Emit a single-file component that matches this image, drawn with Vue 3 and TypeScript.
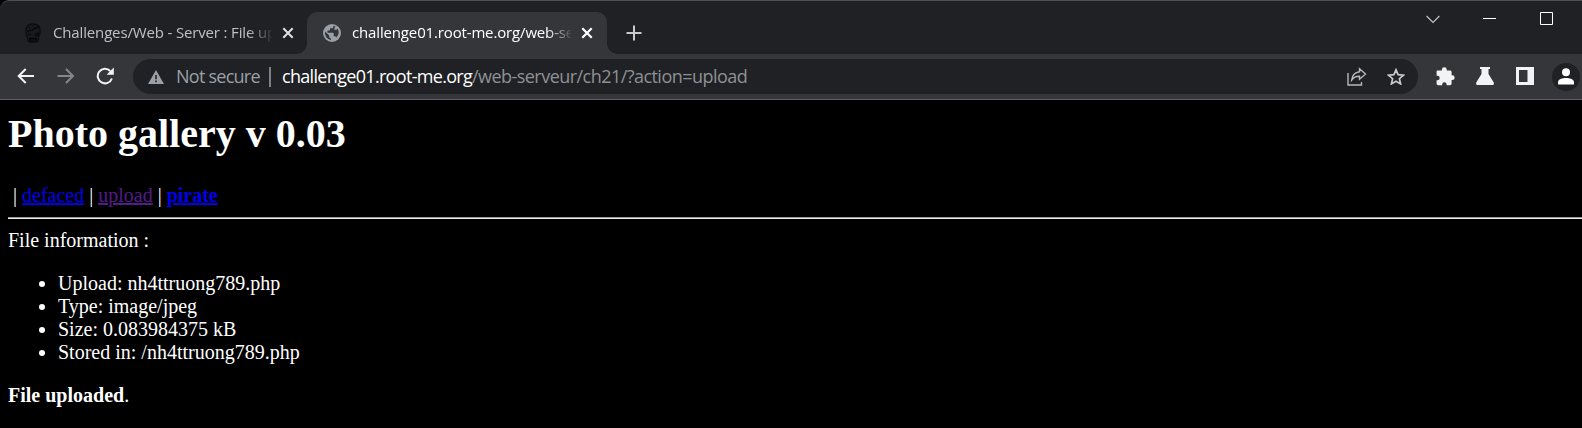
<script setup lang="ts">
interface NavLink { label: string; kind: string }

const links: NavLink[] = [
  { label: 'defaced', kind: 'plain' },
  { label: 'upload', kind: 'visited' },
  { label: 'pirate', kind: 'strong' },
]
const details: string[] = [
  'Upload: nh4ttruong789.php',
  'Type: image/jpeg',
  'Size: 0.083984375 kB',
  'Stored in: /nh4ttruong789.php',
]
</script>

<template>
  <div class="window">
    <header class="strip">
      <div class="tab">
        <svg class="skull" width="16" height="20" viewBox="0 0 16 20">
          <path d="M8 .8C3.500.8.800 3.700.8 8c0 2.400.6 4.300 1.500 5.800L3 18l2 1.200h6l2-1.200.7-4.200C14.600 12.300 15.200 10.400 15.200 8 15.200 3.700 12.500.8 8 .8z" fill="#191a1c" stroke="#0c0c0d" stroke-width="1.200" />
          <path d="M2 8.500 7 7l7-3.500M3 11l3 .6M9 11.500l4-1.500v2l-3 1M5 15.500v3M7 15.500v3M9 15.500v3M11 15.500v3M4 15.300h8M4 4.500h1M7 3h1M9 5h1" fill="none" stroke="#060607" stroke-width="1.200" />
        </svg>
        <span class="title">Challenges/Web - Server : File up</span>
        <svg class="close" width="12" height="12" viewBox="0 0 12 12"><path d="M1.300 1.300l9.400 9.400M10.700 1.300 1.300 10.700" stroke="#dfe1e5" stroke-width="2" /></svg>
      </div>
      <div class="tab active">
        <svg class="globe" width="18" height="18" viewBox="0 0 18 18">
          <circle cx="9" cy="9" r="9" fill="#9aa0a6" />
          <path d="M10.500 1.800v.6c0 1-.8 1.800-1.800 1.800H7v1.500c0 .6-.5.9-1 .9H4.500v2.200h5.200c.6 0 1 .5 1 1v2.400h.9c.8 0 1.500.5 1.700 1.200A7.100 7.100 0 0 0 14.500 4.500l-.9 1.200h-2.200V4l1.100-1.300a7 7 0 0 0-2-.9zM2 7.400a7.200 7.200 0 0 0 6 8.700v-1.700c-1 0-1.800-.8-1.800-1.800v-1z" fill="#35363a" />
        </svg>
        <span class="title">challenge01.root-me.org/web-se</span>
        <svg class="close" width="12" height="12" viewBox="0 0 12 12"><path d="M1.300 1.300l9.400 9.400M10.700 1.300 1.300 10.700" stroke="#fff" stroke-width="2.200" /></svg>
      </div>
      <svg class="plus" width="16" height="16" viewBox="0 0 16 16"><path d="M8 .5v15M.5 8h15" stroke="#c8cacd" stroke-width="2" /></svg>
      <div class="controls">
        <svg width="14" height="14" viewBox="0 0 14 14"><path d="M.6 4 7 10.500 13.400 4" fill="none" stroke="#c5c6c7" stroke-width="1.100" /></svg>
        <svg width="13" height="13" viewBox="0 0 13 13"><path d="M0 6.500h13" stroke="#fff" /></svg>
        <svg width="13" height="13" viewBox="0 0 13 13"><path d="M.5.5h12v12H.5z" fill="none" stroke="#fff" /></svg>
      </div>
    </header>

    <div class="toolbar">
      <svg class="back" width="18" height="16" viewBox="0 0 18 16"><path d="M17 8H2M8.700 1 1.700 8l7 7" fill="none" stroke="#f1f3f4" stroke-width="2" /></svg>
      <svg class="forward" width="18" height="16" viewBox="0 0 18 16"><path d="M.5 8H15M9 1l7 7-7 7" fill="none" stroke="#85868a" stroke-width="2" /></svg>
      <svg class="reload" width="18" height="18" viewBox="0 0 18 18"><path d="M15.900 11.500A7.300 7.300 0 1 1 14.300 4" fill="none" stroke="#f1f3f4" stroke-width="2" /><path d="M17.800.6v7.200h-7.200z" fill="#f1f3f4" /></svg>
      <div class="omnibox">
        <svg class="warn" width="16" height="14" viewBox="0 0 16 14"><path d="M8 0l8 14H0z" fill="#9aa0a6" /><path d="M8 5v4.200M8 10.500v1.800" stroke="#202124" stroke-width="1.600" /></svg>
        <span class="insecure">Not secure</span>
        <i class="divider" />
        <span class="host">challenge01.root-me.org</span><span class="path">/web-serveur/ch21/?action=upload</span>
        <svg class="share" width="20" height="19" viewBox="0 0 20 19"><path d="M1 6v12h13.500v-3" fill="none" stroke="#b6b8bb" stroke-width="1.400" /><path d="M12.500 1.800 18.500 7l-6 5.200V9.300C9.200 9.200 6.700 10.400 4.700 13c.5-4.200 3-7.500 7.800-8.200z" fill="none" stroke="#b6b8bb" stroke-width="1.400" /></svg>
        <svg class="star" width="18" height="17" viewBox="0 0 18 17"><path d="M9 1.800l2.100 4.900 5.300.5-4 3.500 1.200 5.200L9 13.200l-4.600 2.700 1.200-5.200-4-3.500 5.300-.5z" fill="none" stroke="#c7c9cb" stroke-width="1.700" /></svg>
      </div>
      <svg class="puzzle" width="19" height="19" viewBox="0 0 19 19"><path d="M1.700 3.400h4.200V2.600a2.400 2.400 0 0 1 4.800 0v.8h3.200c1 0 1.700.7 1.700 1.700v3.200h.7a2.350 2.350 0 0 1 0 4.700h-.7v3.600c0 1-.7 1.700-1.700 1.700h-3.300v-.9a2.200 2.200 0 0 0-4.400 0v.9H2.300C1.300 18.300.6 17.600.6 16.600v-3.400h.9a2.200 2.200 0 0 0 0-4.400H.6V4.500c0-.7.4-1.100 1.100-1.100z" fill="#f1f3f4" /></svg>
      <svg class="flask" width="18" height="18" viewBox="0 0 18 18"><path d="M4 0h10v2h-1.500v5L17.600 15.300c.7 1.300.1 2.700-1.300 2.700H1.700C.3 18-.3 16.600.4 15.300L5.500 7V2H4z" fill="#f1f3f4" /></svg>
      <svg class="panel" width="18" height="18" viewBox="0 0 18 18"><path fill-rule="evenodd" d="M0 0h18v18H0zM3 3v12h8.500V3z" fill="#f1f3f4" /></svg>
      <div class="avatar"><svg width="16" height="17" viewBox="0 0 16 17"><circle cx="8" cy="4.300" r="4" fill="#fff" /><path d="M0 16.500v-2.200C0 11.300 4.500 10 8 10s8 1.300 8 4.300v2.200z" fill="#fff" /></svg></div>
    </div>

    <main class="page">
      <h1>Photo gallery v 0.03</h1>
      <nav>&nbsp;<template v-for="link in links" :key="link.label">|&nbsp;<a :class="link.kind">{{ link.label }}</a>&nbsp;</template></nav>
      <hr>
      <p class="info">File information :</p>
      <ul><li v-for="item in details" :key="item">{{ item }}</li></ul>
      <p><b>File uploaded</b>.</p>
    </main>
  </div>
</template>

<style>
body { margin: 0; background: #000; overflow: hidden; }
</style>

<style scoped>
.window { width: 1582px; height: 428px; overflow: hidden; background: #000; font-family: "Open Sans", "Noto Sans", sans-serif; }
svg { display: block; flex: none; }
.strip { box-sizing: border-box; height: 54px; display: flex; align-items: flex-end; background: #202124; border-top: 1px solid #4d504e; padding-left: 7px; border-top-left-radius: 9px; }
.tab { position: relative; width: 300px; height: 42px; box-sizing: border-box; display: flex; align-items: center; padding-left: 18px; color: #bdc1c6; font-size: 15px; flex: none; }
.title { width: 219px; margin: -2px 0 0 12px; white-space: nowrap; letter-spacing: -0.15px; line-height: 24px; mask-image: linear-gradient(90deg, #000 89%, transparent 101%); }
.active .title { margin-left: 11px; }
.close { margin-left: 10px; }
.tab.active { background: #35363a; border-radius: 10px 10px 0 0; color: #fff; padding-left: 16px; }
.tab.active::before, .tab.active::after { content: ""; position: absolute; bottom: 0; width: 10px; height: 10px; }
.tab.active::before { left: -10px; background: radial-gradient(circle at 0 0, transparent 9.5px, #35363a 10px); }
.tab.active::after { right: -10px; background: radial-gradient(circle at 100% 0, transparent 9.5px, #35363a 10px); }
.plus { margin: 0 0 13px 19px; }
.controls { margin-left: auto; display: flex; gap: 44px; padding-right: 29px; margin-bottom: 28px; }
.controls svg:first-child { margin-right: -1px; }
.toolbar { box-sizing: border-box; height: 46px; background: #35363a; border-bottom: 1px solid #616266; display: flex; align-items: center; padding-bottom: 1px; }
.back { margin-left: 17px; }
.forward { margin-left: 22px; }
.reload { margin-left: 21px; }
.omnibox { width: 1285px; height: 35px; border-radius: 18px; background: #202124; margin: 1px 0 0 19px; display: flex; align-items: center; font-size: 18px; line-height: 26px; white-space: nowrap; flex: none; }
.warn { margin-left: 15px; margin-top: 1px; }
.insecure, .host, .path { margin-top: -2px; }
.insecure { width: 83px; margin-left: 12px; color: #9aa0a6; letter-spacing: -0.75px; }
.divider { width: 2px; height: 20px; background: #7d8084; margin: 0 11px 0 10px; }
.host { color: #fff; width: 190px; letter-spacing: -0.68px; }
.path { color: #8e9194; letter-spacing: -0.54px; }
.share { margin-left: auto; margin-right: 20px; }
.star { margin-right: 13px; }
.puzzle { margin-left: 18px; }
.flask { margin-left: 21px; }
.panel { margin-left: 22px; }
.avatar { margin: 1px 0 0 18px; width: 28px; height: 28px; border-radius: 50%; background: #202124; display: flex; align-items: center; justify-content: center; flex: none; }
.page { padding: 11px 0 0 8px; color: #fff; font: 20px/23px "Liberation Serif", serif; }
h1 { margin: 0 0 27px; font-size: 40px; line-height: 46px; }
nav { white-space: nowrap; }
nav a { text-decoration: underline; color: #0000ee; }
nav a.visited { color: #551a8b; }
nav a.strong { font-weight: bold; }
hr { margin: 10px 0; border: 0; height: 1px; border-top: 1px solid #9a9a9a; background: #eee; }
p { margin: 0; }
ul { margin: 20px 0; padding-left: 50px; }
</style>
